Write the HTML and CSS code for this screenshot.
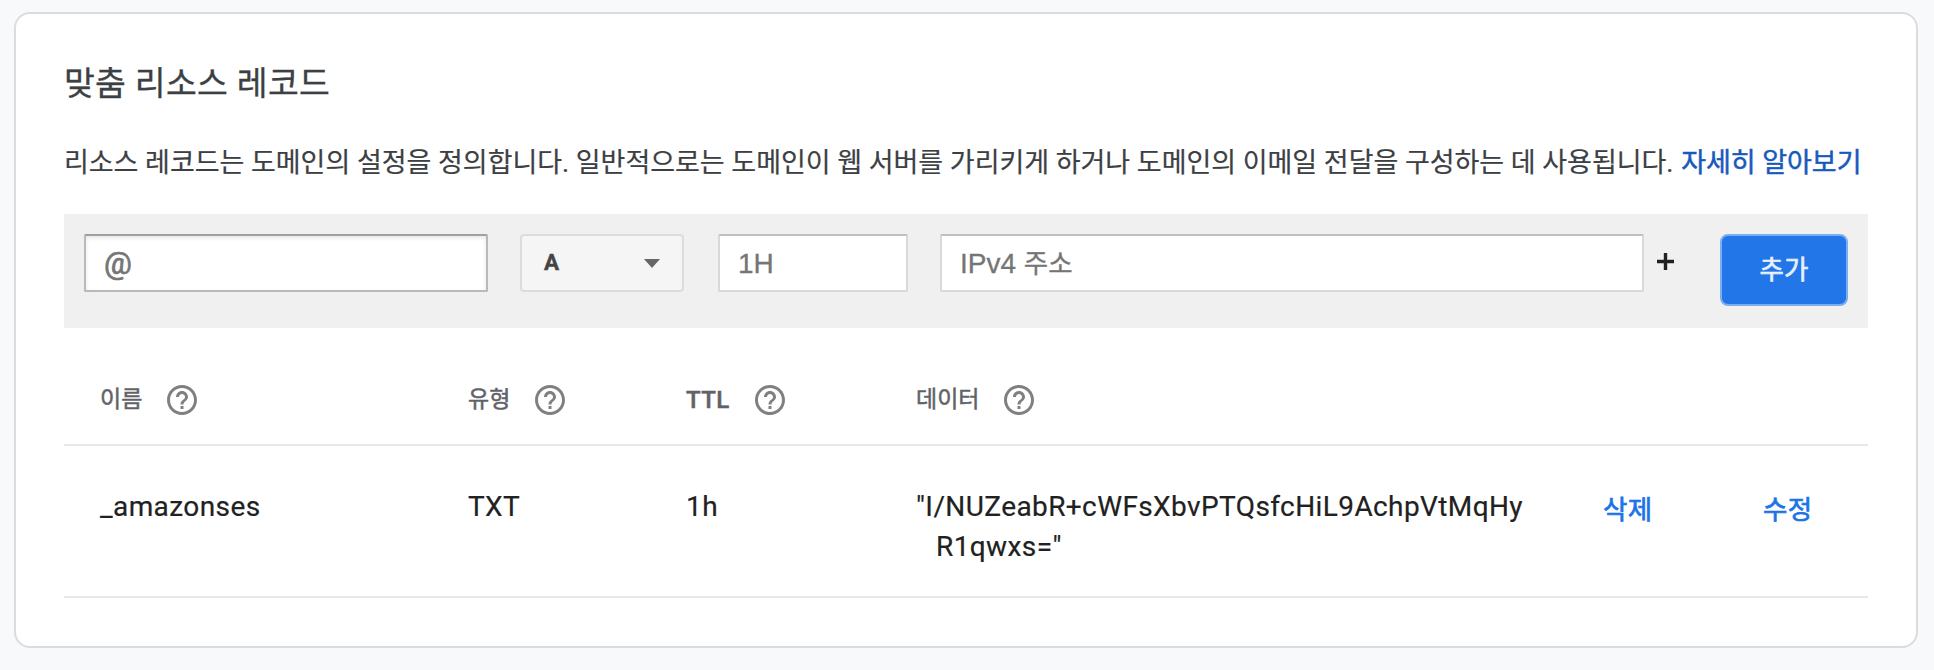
FILE: index.html
```html
<!DOCTYPE html>
<html lang="ko">
<head>
<meta charset="utf-8">
<title>맞춤 리소스 레코드</title>
<link rel="stylesheet" href="styles.css">
</head>
<body>
<svg width="0" height="0" class="defs" aria-hidden="true">
  <symbol id="help" viewBox="2 2 20 20"><path d="M11 18h2v-2h-2v2zm1-16C6.48 2 2 6.48 2 12s4.48 10 10 10 10-4.48 10-10S17.52 2 12 2zm0 18c-4.41 0-8-3.59-8-8s3.590-8 8-8 8 3.590 8 8-3.590 8-8 8zm0-14c-2.210 0-4 1.790-4 4h2c0-1.100.9-2 2-2s2 .9 2 2c0 2-3 1.750-3 5h2c0-2.250 3-2.500 3-5 0-2.210-1.790-4-4-4z"/></symbol>
</svg>
<main class="card">
  <h1 class="title">맞춤 리소스 레코드</h1>
  <p class="description"><span class="sentence">리소스 레코드는 도메인의 설정을 정의합니다. 일반적으로는 도메인이 웹 서버를 가리키게 하거나 도메인의 이메일 전달을 구성하는 데 사용됩니다. </span><a class="learn-more">자세히 알아보기</a></p>
  <form class="record-form">
    <div class="field field-name"><span class="at">@</span></div>
    <div class="select"><span>A</span><i class="arrow"></i></div>
    <div class="field field-ttl">1H</div>
    <div class="field field-data">IPv4 <span class="address">주소</span></div>
    <svg class="plus" viewBox="0 0 17 17"><path d="M8.500 0v17M0 8.500h17"/></svg>
    <button type="button" class="add">추가</button>
  </form>
  <section class="table">
    <div class="row head">
      <div class="cell">이름<svg class="help"><use href="#help"/></svg></div>
      <div class="cell">유형<svg class="help"><use href="#help"/></svg></div>
      <div class="cell latin">TTL<svg class="help"><use href="#help"/></svg></div>
      <div class="cell">데이터<svg class="help"><use href="#help"/></svg></div>
    </div>
    <div class="row body">
      <div>_amazonses</div>
      <div>TXT</div>
      <div>1h</div>
      <div class="data">"I/NUZeabR+cWFsXbvPTQsfcHiL9AchpVtMqHy<br>R1qwxs="</div>
      <a class="action">삭제</a>
      <a class="action">수정</a>
    </div>
  </section>
</main>
</body>
</html>
```
FILE: styles.css
```css
* { box-sizing: border-box; }

body {
  margin: 0;
  padding: 12px 16px 22px 14px;
  height: 670px;
  background: #f8f9fb;
  font-family: Roboto, "Noto Sans CJK KR", sans-serif;
  color: #212121;
}

.defs { position: absolute; }

.card {
  height: 636px;
  padding: 46px 48px 0;
  border: 2px solid #dadce0;
  border-radius: 16px;
  background: #fff;
}

.title {
  margin: 0;
  height: 48px;
  font-size: 33.5px;
  letter-spacing: 0.3px;
  line-height: 48px;
  font-weight: 400;
  color: #3c4043;
  white-space: nowrap;
  -webkit-text-stroke: 0.3px #3c4043;
}

.description {
  margin: 35px 0 0;
  height: 40px;
  font-size: 27px;
  letter-spacing: -0.03px;
  line-height: 40px;
  color: #3c4043;
  white-space: nowrap;
  -webkit-text-stroke: 0.2px #3c4043;
}

.learn-more {
  margin-left: 1px;
  color: #185abc;
  -webkit-text-stroke: 0.5px #185abc;
}

.record-form {
  display: flex;
  align-items: flex-start;
  margin-top: 31px;
  padding: 20px;
  height: 114px;
  background: #f0f0f0;
}

.field {
  height: 58px;
  padding-left: 18px;
  border: 2px solid #d9d9d9;
  border-top-color: #c0c0c0;
  border-radius: 2px;
  background: #fff;
  color: #757575;
  font-family: "Liberation Sans", "Noto Sans CJK KR", sans-serif;
  font-size: 28px;
  line-height: 56px;
  -webkit-text-stroke: 0.3px #757575;
}

.field-name {
  width: 404px;
  border-color: #a0a0a0 #b9b9b9 #b9b9b9;
  box-shadow: inset 0 2px 4px rgba(0, 0, 0, 0.1);
}

.at {
  font-family: Roboto, sans-serif;
  font-size: 31px;
  -webkit-text-stroke: 0.7px #757575;
}

.field-ttl { width: 190px; margin-left: 34px; }
.field-data { width: 704px; margin-left: 32px; }
.address { font-size: 26.5px; }

.select {
  display: flex;
  align-items: center;
  justify-content: space-between;
  width: 164px;
  height: 58px;
  margin-left: 32px;
  padding: 0 22px;
  border: 2px solid #dcdcdc;
  border-radius: 4px;
  background: #f5f5f5;
  color: #444;
  font-size: 22.5px;
  font-weight: 700;
  -webkit-text-stroke: 0.4px #444;
}

.select span { padding-bottom: 2px; }

.arrow {
  border: 8px solid transparent;
  border-top: 9px solid #666;
  border-bottom: 0;
}

.plus {
  width: 17px;
  height: 17px;
  margin: 19px 46px 0 13px;
  stroke: #212121;
  stroke-width: 3.4;
}

.add {
  width: 128px;
  height: 72px;
  padding: 0 0 4px;
  border: 2px solid #7badf1;
  border-radius: 8px;
  background: #2276e7;
  color: #e8f0fe;
  font: 400 26.5px/1 "Noto Sans CJK KR", sans-serif;
  -webkit-text-stroke: 0.6px #e8f0fe;
}

.row {
  display: grid;
  grid-template-columns: 368px 218px 230px 687px 160px 1fr;
  padding-left: 36px;
  border-bottom: 2px solid #e8e8e8;
}

.head {
  height: 118px;
  padding-top: 53px;
  color: #5f6368;
  font-size: 23px;
  font-weight: 400;
  -webkit-text-stroke: 0.5px #5f6368;
}

.cell { display: flex; align-items: center; height: 38px; line-height: 36px; }
.latin { font-size: 24px; font-weight: 500; letter-spacing: 0.4px; }

.help {
  width: 30px;
  height: 30px;
  margin-left: 25px;
  fill: #808080;
}

.body {
  height: 152px;
  padding-top: 41px;
  font-size: 28px;
  letter-spacing: 0.4px;
  line-height: 40px;
  -webkit-text-stroke: 0.2px #212121;
}

.data { padding-left: 20px; text-indent: -20px; white-space: nowrap; }

.action {
  margin-top: 3px;
  color: #1a73e8;
  font-size: 26.5px;
  -webkit-text-stroke: 0.7px #1a73e8;
}
```
